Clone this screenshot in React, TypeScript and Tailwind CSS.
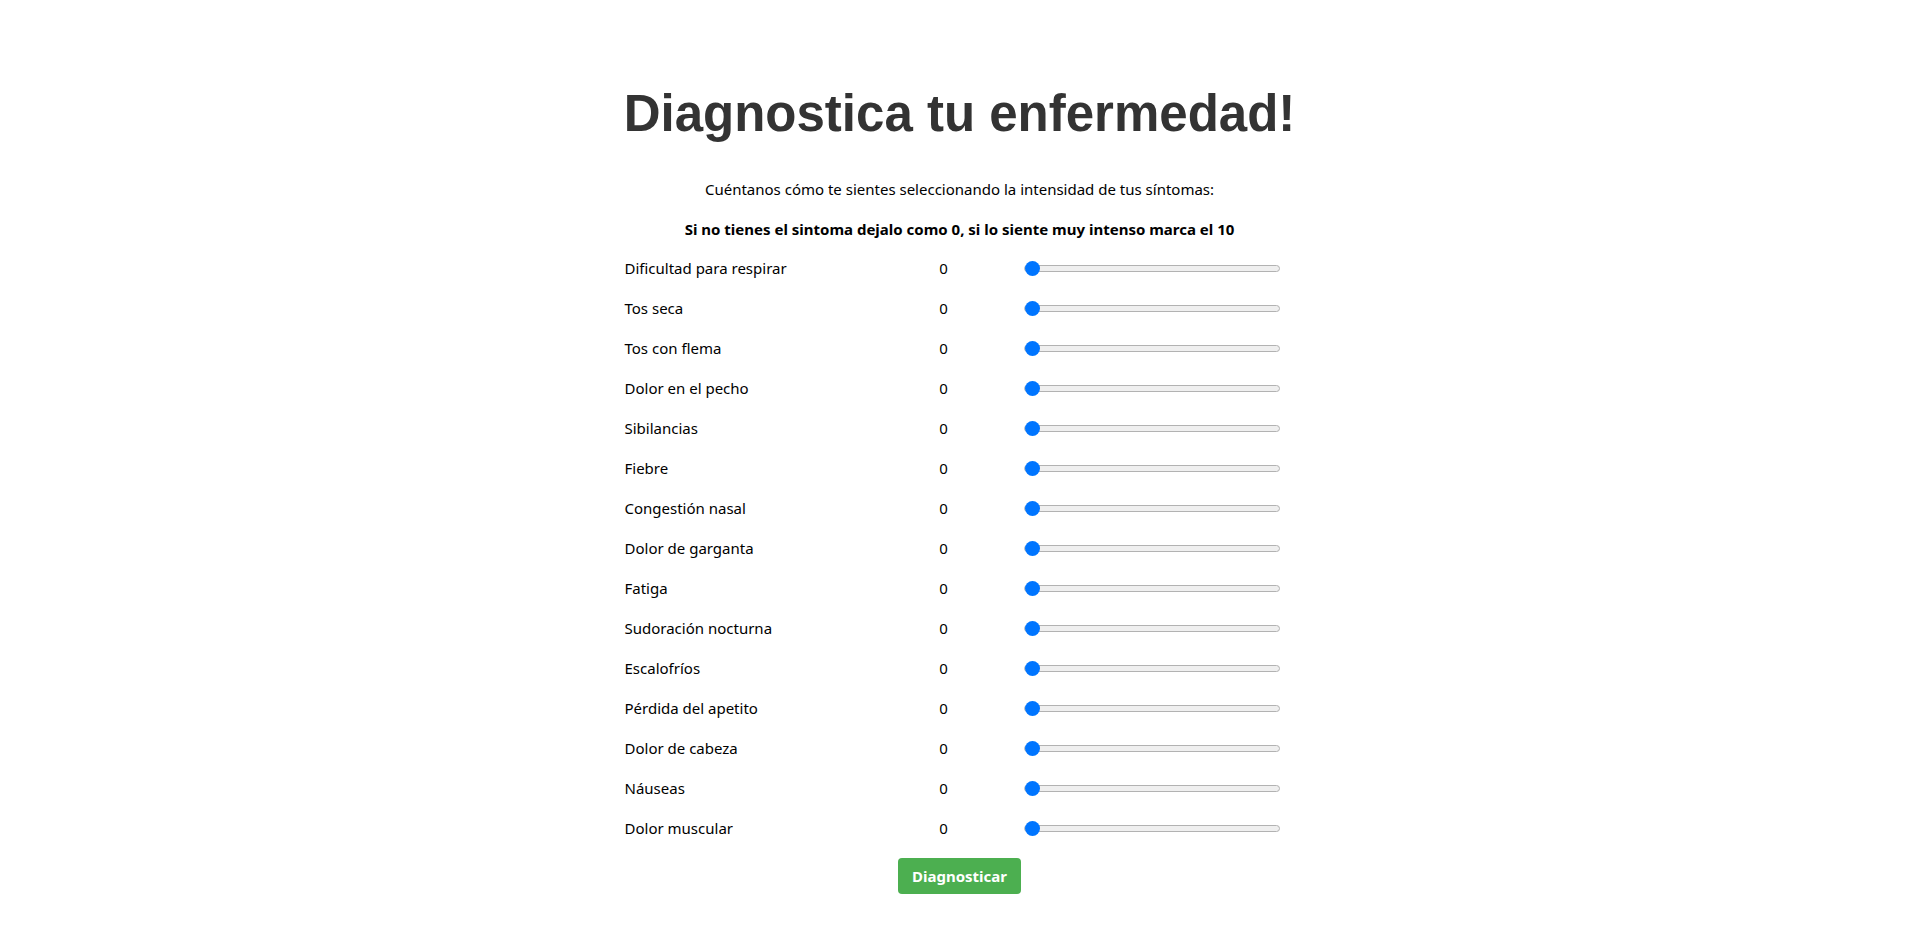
import { useState } from 'react'

const SYMPTOMS = [
  'Dificultad para respirar',
  'Tos seca',
  'Tos con flema',
  'Dolor en el pecho',
  'Sibilancias',
  'Fiebre',
  'Congestión nasal',
  'Dolor de garganta',
  'Fatiga',
  'Sudoración nocturna',
  'Escalofríos',
  'Pérdida del apetito',
  'Dolor de cabeza',
  'Náuseas',
  'Dolor muscular',
]

export default function App() {
  const [values, setValues] = useState<number[]>(SYMPTOMS.map(() => 0))

  return (
    <div className="min-h-screen bg-white font-['Noto_Sans',sans-serif] text-black">
      <main className="mx-auto flex w-[670px] flex-col items-center pt-[86px]">
        <h1 className="whitespace-nowrap font-['Liberation_Sans',Arial,sans-serif] text-[51px] font-bold leading-[56px] text-[#333]">
          Diagnostica tu enfermedad!
        </h1>
        <p className="mt-[35px] text-[15px] leading-[24px]">
          Cuéntanos cómo te sientes seleccionando la intensidad de tus síntomas:
        </p>
        <p className="mt-[16px] text-[15px] font-bold leading-[24px]">
          Si no tienes el sintoma dejalo como 0, si lo siente muy intenso marca el 10
        </p>

        {/* One row per symptom: name, current value, slider */}
        <div className="mt-[7px] flex w-full flex-col">
          {SYMPTOMS.map((name, i) => (
            <div key={name} className="flex h-[40px] items-center">
              <span className="w-[280px] text-[15px]">{name}</span>
              <span className="w-[78px] text-center text-[15px]">{values[i]}</span>
              <input
                type="range"
                min={0}
                max={10}
                value={values[i]}
                onChange={(e) => {
                  const next = [...values]
                  next[i] = Number(e.target.value)
                  setValues(next)
                }}
                className="ml-[41px] h-[15px] w-[256px] cursor-pointer appearance-none bg-transparent [&::-webkit-slider-runnable-track]:h-[7px] [&::-webkit-slider-runnable-track]:rounded-full [&::-webkit-slider-runnable-track]:border [&::-webkit-slider-runnable-track]:border-[#b2b2b2] [&::-webkit-slider-runnable-track]:bg-[#efefef] [&::-webkit-slider-thumb]:mt-[-5px] [&::-webkit-slider-thumb]:h-[15px] [&::-webkit-slider-thumb]:w-[15px] [&::-webkit-slider-thumb]:appearance-none [&::-webkit-slider-thumb]:rounded-full [&::-webkit-slider-thumb]:bg-[#0075ff]"
              />
            </div>
          ))}
        </div>

        <button
          type="button"
          className="mt-[10px] h-[36px] w-[123px] rounded-[4px] bg-[#4caf50] text-[15px] font-bold text-white"
        >
          Diagnosticar
        </button>
      </main>
    </div>
  )
}
